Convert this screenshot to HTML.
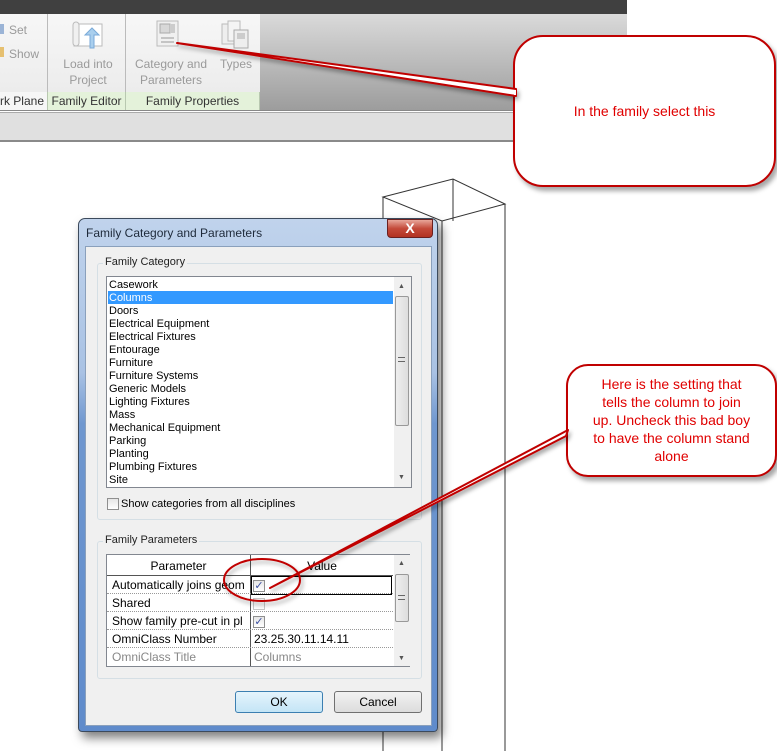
<!DOCTYPE html>
<html><head><meta charset="utf-8"><style>
*{margin:0;padding:0;box-sizing:border-box}
body{width:777px;height:751px;overflow:hidden;background:#fff;position:relative;font-family:"Liberation Sans",sans-serif;font-size:12px;color:#000}
.a{position:absolute}
.rb{color:#9a9a9a;font-size:12px;text-align:center;line-height:16px}
.pl{position:absolute;top:92px;height:18px;background:#e4f2da;border-right:1px solid #b8c8b0;font-size:12px;color:#333;text-align:center;line-height:18px;overflow:hidden;white-space:nowrap}
.li{position:absolute;left:109px;height:13px;line-height:13px;font-size:11px}
.row{position:absolute;left:107px;width:286px;height:18px;border-bottom:1px dotted #999;font-size:12px;line-height:18px}
.row span{position:absolute;left:5px}
.row b{font-weight:normal;position:absolute;left:147px}
.cb{position:absolute;width:12px;height:12px;border:1px solid #8f8f8f;background:linear-gradient(#e6e6e6,#fff)}
.callout{position:absolute;border:2px solid #c00000;background:#fff;color:#e00000;font-size:14px;text-align:center;box-shadow:3px 4px 5px rgba(0,0,0,.35)}
</style></head><body>
<div class="a" style="left:0;top:0;width:627px;height:14px;background:#404040"></div>
<div class="a" style="left:0;top:14px;width:627px;height:97px;background:linear-gradient(#dadada,#9c9c9c)"></div>
<div class="a" style="left:0;top:14px;width:260px;height:78px;background:linear-gradient(#f7f7f7,#ececec)"></div>
<div class="a" style="left:47px;top:14px;width:1px;height:96px;background:#bbb"></div>
<div class="a" style="left:125px;top:14px;width:1px;height:96px;background:#bbb"></div>
<div class="pl" style="left:0;width:48px;background:#f6f6f6"><span style="position:absolute;right:3px">rk Plane</span></div>
<div class="pl" style="left:48px;width:78px">Family Editor</div>
<div class="pl" style="left:126px;width:134px">Family Properties</div>
<div class="a rb" style="left:9px;top:22px;text-align:left">Set</div>
<div class="a rb" style="left:9px;top:46px;text-align:left">Show</div>
<div class="a" style="left:0;top:24px;width:4px;height:10px;background:#9bb4d6"></div>
<div class="a" style="left:0;top:47px;width:4px;height:10px;background:#e6c070"></div>
<svg class="a" style="left:70px;top:20px" width="36" height="30"><rect x="4" y="4" width="28" height="22" fill="#fff" stroke="#bbb"/><rect x="3" y="2" width="6" height="24" rx="3" fill="#f0f0f0" stroke="#bbb"/><path d="M20 28V15h-5l7-7 7 7h-5v13z" fill="#a9cfee" stroke="#7aaad8"/></svg>
<div class="a rb" style="left:52px;top:56px;width:72px">Load into<br>Project</div>
<svg class="a" style="left:156px;top:20px" width="24" height="28"><rect x="1" y="1" width="21" height="25" fill="#f0f0f0" stroke="#bbb"/><rect x="4" y="4" width="10" height="9" fill="#d8d8d8" stroke="#aaa"/><rect x="15" y="4" width="4" height="9" fill="#ccc"/><path d="M5 18h13M5 22h13" stroke="#999"/></svg>
<svg class="a" style="left:220px;top:20px" width="32" height="30"><rect x="2" y="4" width="12" height="20" fill="#eee" stroke="#bbb"/><rect x="8" y="1" width="12" height="20" fill="#f4f4f4" stroke="#bbb"/><rect x="14" y="10" width="14" height="18" fill="#eee" stroke="#aaa"/><rect x="17" y="13" width="8" height="6" fill="#ccc"/></svg>
<div class="a rb" style="left:128px;top:56px;width:86px">Category and<br>Parameters</div>
<div class="a rb" style="left:214px;top:56px;width:44px">Types</div>
<div class="a" style="left:0;top:110px;width:627px;height:3px;border-top:1px solid #888;border-bottom:1px solid #aaa;background:#fff"></div>
<div class="a" style="left:0;top:113px;width:627px;height:29px;background:#e0e0e0;border-bottom:2px solid #8a8a8a"></div>
<svg class="a" style="left:0;top:0" width="777" height="751">
<path d="M383 197L453 179L505 204L442 221ZM383 197V751M505 204V751M442 221V751M453 179V221" fill="none" stroke="#333" stroke-width="1"/>
</svg>
<div class="a" style="left:78px;top:218px;width:360px;height:514px;border:1px solid #3c4a5c;border-radius:7px 7px 4px 4px;background:linear-gradient(#c0d3ec 0,#a9c2e4 30%,#6f97cf 40%,#5f8bcb 100%);box-shadow:4px 6px 10px rgba(0,0,0,.5)"></div>
<div class="a" style="left:86px;top:226px;font-size:12px;color:#1e2a3a">Family Category and Parameters</div>
<div class="a" style="left:387px;top:219px;width:46px;height:19px;border:1px solid #6a2020;border-radius:0 0 4px 4px;background:linear-gradient(#e8a69a,#c44a3a 50%,#b23222);color:#fff;font-weight:bold;text-align:center;line-height:17px;font-size:14px">X</div>
<div class="a" style="left:85px;top:246px;width:347px;height:480px;background:#f0f0f0;border:1px solid #8aa0bc"></div>
<div class="a" style="left:97px;top:263px;width:325px;height:257px;border:1px solid #d5dfe5;border-radius:3px"></div>
<div class="a" style="left:103px;top:256px;background:#f0f0f0;padding:0 2px;font-size:11px;color:#222">Family Category</div>
<div class="a" style="left:106px;top:276px;width:306px;height:212px;background:#fff;border:1px solid #828790"></div>
<div class="a" style="left:108px;top:291px;width:285px;height:13px;background:#3399ff"></div>
<div class="li" style="top:279px">Casework</div>
<div class="li" style="top:292px;color:#fff">Columns</div>
<div class="li" style="top:305px">Doors</div>
<div class="li" style="top:318px">Electrical Equipment</div>
<div class="li" style="top:331px">Electrical Fixtures</div>
<div class="li" style="top:344px">Entourage</div>
<div class="li" style="top:357px">Furniture</div>
<div class="li" style="top:370px">Furniture Systems</div>
<div class="li" style="top:383px">Generic Models</div>
<div class="li" style="top:396px">Lighting Fixtures</div>
<div class="li" style="top:409px">Mass</div>
<div class="li" style="top:422px">Mechanical Equipment</div>
<div class="li" style="top:435px">Parking</div>
<div class="li" style="top:448px">Planting</div>
<div class="li" style="top:461px">Plumbing Fixtures</div>
<div class="li" style="top:474px">Site</div>
<div class="a" style="left:394px;top:277px;width:17px;height:210px;background:#f0f0f0"></div>
<div class="a" style="left:395px;top:296px;width:14px;height:130px;border:1px solid #999;border-radius:2px;background:linear-gradient(90deg,#eee,#ddd)"></div>
<div class="a" style="left:398px;top:283px;font-size:7px;color:#555">▲</div>
<div class="a" style="left:398px;top:474px;font-size:7px;color:#555">▼</div>
<div class="a" style="left:398px;top:357px;width:7px;height:5px;border-top:1px solid #666;border-bottom:1px solid #666"></div>
<div class="cb" style="left:107px;top:498px"></div>
<div class="a" style="left:121px;top:498px;font-size:11px">Show categories from all disciplines</div>
<div class="a" style="left:97px;top:541px;width:325px;height:138px;border:1px solid #d5dfe5;border-radius:3px"></div>
<div class="a" style="left:103px;top:534px;background:#f0f0f0;padding:0 2px;font-size:11px;color:#222">Family Parameters</div>
<div class="a" style="left:106px;top:554px;width:304px;height:113px;background:#fff;border:1px solid #828790"></div>
<div class="a" style="left:107px;top:555px;width:286px;height:21px;background:#fff;border-bottom:1px solid #555"></div>
<div class="a" style="left:250px;top:555px;width:1px;height:111px;background:#555"></div>
<div class="a" style="left:107px;top:559px;width:143px;text-align:center">Parameter</div>
<div class="a" style="left:251px;top:559px;width:142px;text-align:center">Value</div>
<div class="row" style="top:576px"><span>Automatically joins geom</span></div>
<div class="a" style="left:251px;top:576px;width:141px;height:19px;border:1px solid #000"></div>
<div class="row" style="top:594px"><span>Shared</span></div>
<div class="row" style="top:612px"><span>Show family pre-cut in pl</span></div>
<div class="row" style="top:630px"><span>OmniClass Number</span><b>23.25.30.11.14.11</b></div>
<div class="row" style="top:648px;color:#888;border:none"><span>OmniClass Title</span><b>Columns</b></div>
<div class="cb" style="left:253px;top:580px;color:#3a4ea0;font-size:11px;line-height:10px;text-align:center">✓</div>
<div class="cb" style="left:253px;top:598px;opacity:.5"></div>
<div class="cb" style="left:253px;top:616px;color:#3a4ea0;font-size:11px;line-height:10px;text-align:center">✓</div>
<div class="a" style="left:394px;top:555px;width:16px;height:111px;background:#f0f0f0"></div>
<div class="a" style="left:395px;top:574px;width:14px;height:48px;border:1px solid #999;border-radius:2px;background:linear-gradient(90deg,#eee,#ddd)"></div>
<div class="a" style="left:398px;top:595px;width:7px;height:5px;border-top:1px solid #666;border-bottom:1px solid #666"></div>
<div class="a" style="left:398px;top:560px;font-size:7px;color:#555">▲</div>
<div class="a" style="left:398px;top:655px;font-size:7px;color:#555">▼</div>
<div class="a" style="left:235px;top:691px;width:88px;height:22px;border:1px solid #3c7fb1;border-radius:3px;background:linear-gradient(#e5f4fc,#c4e5f6);text-align:center;line-height:20px">OK</div>
<div class="a" style="left:334px;top:691px;width:88px;height:22px;border:1px solid #707070;border-radius:3px;background:linear-gradient(#f2f2f2,#dcdcdc);text-align:center;line-height:20px">Cancel</div>
<div class="callout" style="left:513px;top:35px;width:263px;height:152px;border-radius:30px;line-height:148px">In the family select this</div>
<div class="callout" style="left:566px;top:364px;width:211px;height:113px;border-radius:22px;line-height:18px;padding-top:9px">Here is the setting that<br>tells the column to join<br>up. Uncheck this bad boy<br>to have the column stand<br>alone</div>
<svg class="a" style="left:0;top:0" width="777" height="751">
<defs><filter id="s"><feDropShadow dx="2" dy="3" stdDeviation="2" flood-opacity=".35"/></filter></defs>
<g filter="url(#s)">
<path d="M177 43L516 89L516 96Z" fill="#fff" stroke="#c00000" stroke-width="2" stroke-linejoin="round"/>
<path d="M568 430L566 436L270 588Z" fill="#fff" stroke="#c00000" stroke-width="2" stroke-linejoin="round"/>
<ellipse cx="262" cy="580" rx="38" ry="21" fill="none" stroke="#c00000" stroke-width="2"/>
</g>
<path d="M515 90V95" stroke="#fff" stroke-width="2"/>
</svg>
</body></html>
